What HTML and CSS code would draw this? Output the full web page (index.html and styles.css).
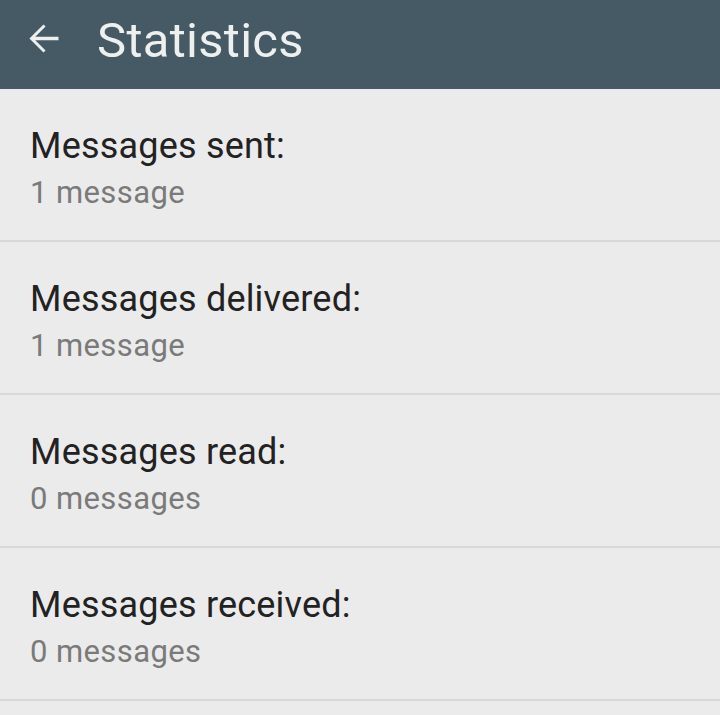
FILE: index.html
```html
<!DOCTYPE html>
<html>
<head>
<meta charset="utf-8">
<link rel="stylesheet" href="styles.css">
</head>
<body>
<header class="appbar">
  <svg class="back" viewBox="0 0 24 24" width="45" height="45"><path d="M20 11.1H7.6l5.5-5.5L12 4.5 4.5 12 12 19.5l1.1-1.1-5.5-5.5H20z" fill="#eef0f0"/></svg>
  <h1 class="title">Statistics</h1>
</header>
<main class="list">
  <div class="row"><div class="label">Messages sent:</div><div class="value">1 message</div></div>
  <div class="row"><div class="label">Messages delivered:</div><div class="value">1 message</div></div>
  <div class="row"><div class="label">Messages read:</div><div class="value">0 messages</div></div>
  <div class="row"><div class="label">Messages received:</div><div class="value">0 messages</div></div>
</main>
</body>
</html>
```
FILE: styles.css
```css
html, body {
  margin: 0;
  padding: 0;
  background: #ebebeb;
  font-family: Roboto, "Noto Sans", sans-serif;
}
.appbar {
  height: 89px;
  background: #465a65;
  display: flex;
  align-items: center;
  padding-left: 21px;
  box-sizing: border-box;
}
.back {
  flex: none;
  margin-top: -12px;
}
.title {
  margin: -7px 0 0 31px;
  font-weight: 400;
  font-size: 49px;
  letter-spacing: 0.3px;
  color: #eef0f0;
  line-height: 56px;
}
.row {
  padding: 35px 30px 29px 30px;
  border-bottom: 2px solid #d8d8d8;
}
.label {
  font-size: 36px;
  letter-spacing: 0.2px;
  line-height: 44px;
  color: #222222;
}
.value {
  margin-top: 7px;
  font-size: 31px;
  letter-spacing: 0.4px;
  line-height: 36px;
  color: #7a7a7a;
}
```
